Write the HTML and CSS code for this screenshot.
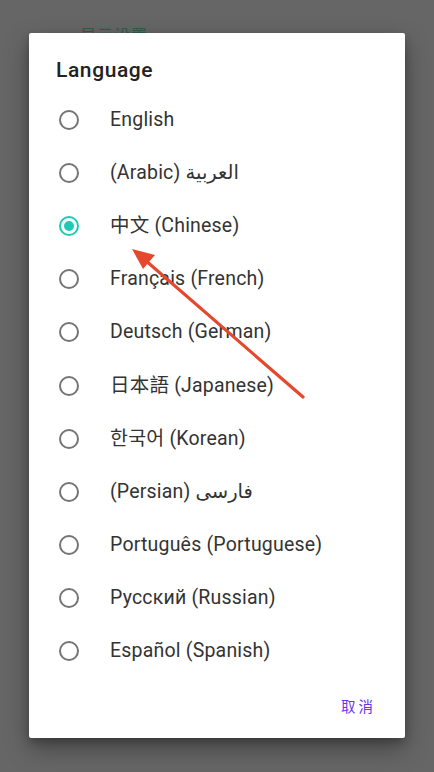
FILE: index.html
```html
<!DOCTYPE html>
<html>
<head>
<meta charset="utf-8">
<link rel="stylesheet" href="styles.css">
</head>
<body>
<div class="page">
  <div class="page-title">显示设置</div>
</div>
<div class="dialog">
  <div class="title">Language</div>
  <ul class="list">
    <li class="row"><span class="radio"></span><span class="label">English</span></li>
    <li class="row"><span class="radio"></span><span class="label">(Arabic) العربية</span></li>
    <li class="row"><span class="radio checked"></span><span class="label">中文 (Chinese)</span></li>
    <li class="row"><span class="radio"></span><span class="label">Français (French)</span></li>
    <li class="row"><span class="radio"></span><span class="label">Deutsch (German)</span></li>
    <li class="row"><span class="radio"></span><span class="label">日本語 (Japanese)</span></li>
    <li class="row"><span class="radio"></span><span class="label">한국어 (Korean)</span></li>
    <li class="row"><span class="radio"></span><span class="label">(Persian) فارسی</span></li>
    <li class="row"><span class="radio"></span><span class="label">Português (Portuguese)</span></li>
    <li class="row"><span class="radio"></span><span class="label">Русский (Russian)</span></li>
    <li class="row"><span class="radio"></span><span class="label">Español (Spanish)</span></li>
  </ul>
  <div class="actions"><span class="btn">取消</span></div>
</div>
<svg class="arrow" width="434" height="772" viewBox="0 0 434 772">
  <line x1="303" y1="397" x2="145" y2="260" stroke="#e5482d" stroke-width="3.2" stroke-linecap="round"/>
  <polygon points="132,249 155,255 143,269" fill="#e5482d"/>
</svg>
</body>
</html>
```
FILE: styles.css
```css
html, body {
  margin: 0;
  padding: 0;
}
body {
  width: 434px;
  height: 772px;
  background: #666666;
  font-family: Roboto, "Noto Sans", "Noto Sans CJK SC", sans-serif;
  overflow: hidden;
  position: relative;
}
.page {
  padding: 26px 0 0 80px;
}
.page-title {
  color: #2f5e4c;
  font-size: 16px;
  line-height: 20px;
  letter-spacing: 1px;
}
.dialog {
  position: absolute;
  left: 29px;
  top: 33px;
  width: 376px;
  height: 705px;
  background: #fff;
  border-radius: 2px;
  box-shadow: 0 10px 24px rgba(0,0,0,0.35), 0 4px 8px rgba(0,0,0,0.2);
  box-sizing: border-box;
  padding-top: 25px;
  display: flex;
  flex-direction: column;
}
.title {
  padding-left: 27px;
  font-size: 21px;
  font-weight: 500;
  line-height: 24px;
  letter-spacing: 0.6px;
  color: #222;
}
.list {
  list-style: none;
  margin: 11px 0 0;
  padding: 0;
}
.row {
  height: 53.2px;
  display: flex;
  align-items: center;
  padding-left: 30px;
}
.radio {
  width: 20px;
  height: 20px;
  box-sizing: border-box;
  border: 2px solid #757575;
  border-radius: 50%;
  flex: none;
  display: flex;
  align-items: center;
  justify-content: center;
}
.radio.checked {
  border-color: #1ccbb5;
}
.radio.checked::after {
  content: "";
  width: 10px;
  height: 10px;
  border-radius: 50%;
  background: #1ccbb5;
}
.label {
  margin-left: 31px;
  font-size: 19.5px;
  letter-spacing: 0.2px;
  color: #333;
  line-height: 24px;
  font-family: Roboto, "Noto Sans", "Noto Sans CJK SC", "DejaVu Sans", sans-serif;
}
.actions {
  display: flex;
  justify-content: flex-end;
  padding: 10px 21px 0 0;
}
.btn {
  color: #6a35e8;
  font-size: 14.5px;
  line-height: 36px;
  padding: 0 8px 0 0;
  letter-spacing: 3px;
  font-family: "Noto Sans CJK SC", sans-serif;
}
.arrow {
  position: absolute;
  left: 0;
  top: 0;
  pointer-events: none;
}
```
